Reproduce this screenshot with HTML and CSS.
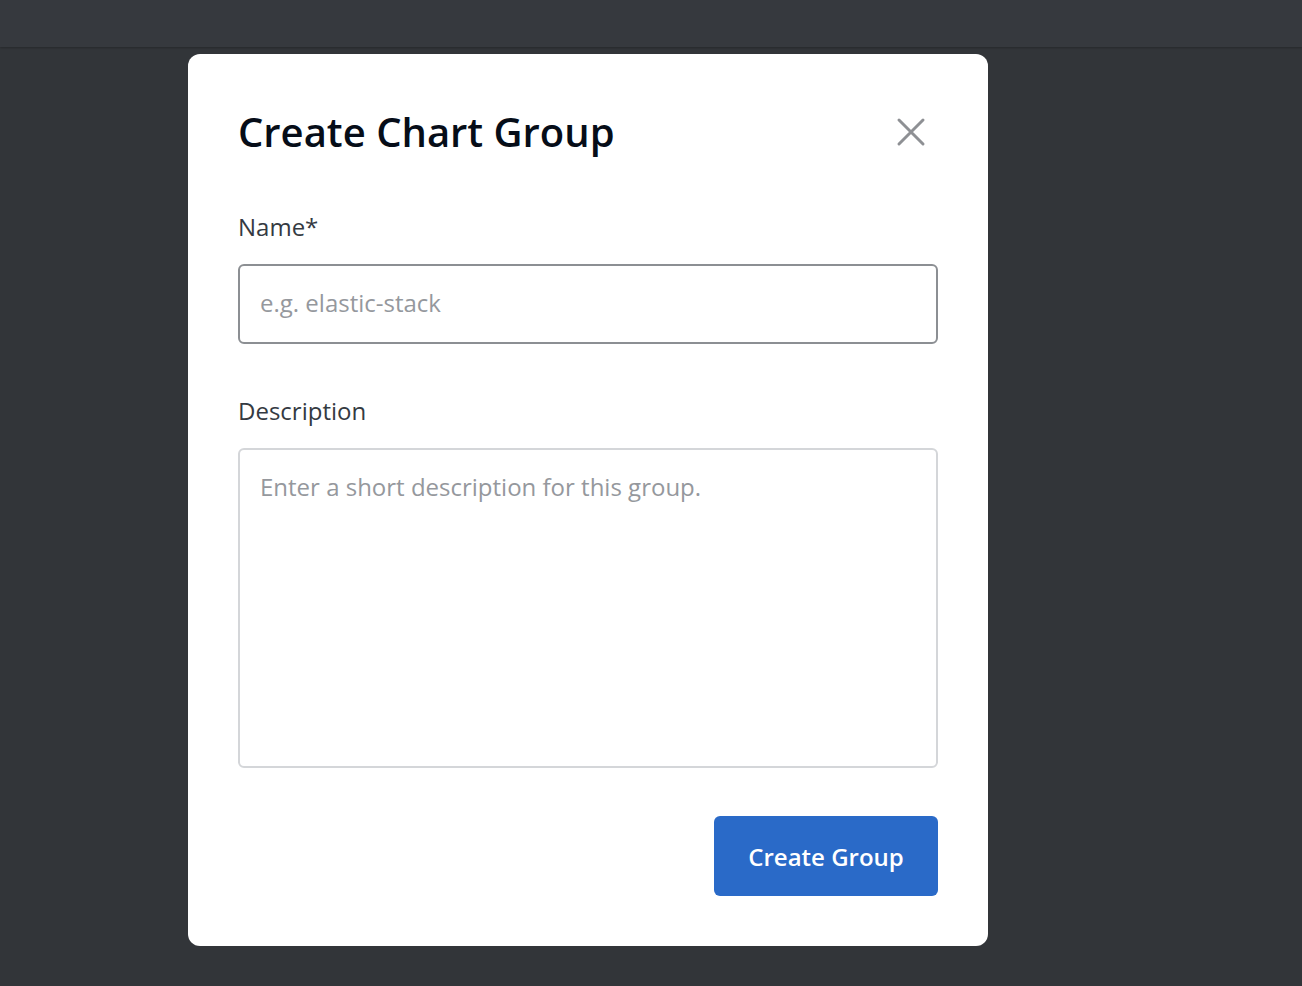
FILE: index.html
```html
<!DOCTYPE html>
<html>
<head>
<meta charset="utf-8">
<link rel="stylesheet" href="styles.css">
</head>
<body>
<div class="topbar"></div>
<div class="modal">
  <div class="modal-header">
    <h1 class="title">Create Chart Group</h1>
    <button class="close" aria-label="Close">
      <svg width="30" height="30" viewBox="0 0 30 30"><path d="M3 3 L27 27 M27 3 L3 27" stroke="#8e9094" stroke-width="3" stroke-linecap="round" fill="none"/></svg>
    </button>
  </div>
  <div class="field">
    <label class="label">Name*</label>
    <input class="input" type="text" placeholder="e.g. elastic-stack">
  </div>
  <div class="field">
    <label class="label">Description</label>
    <textarea class="textarea" placeholder="Enter a short description for this group."></textarea>
  </div>
  <div class="actions">
    <button class="primary">Create Group</button>
  </div>
</div>
</body>
</html>
```
FILE: styles.css
```css
html, body {
  margin: 0;
  padding: 0;
  height: 100%;
}
body {
  background: #323539;
  font-family: "Open Sans", "Noto Sans", sans-serif;
  overflow: hidden;
}
.topbar {
  height: 47px;
  background: #36393e;
  box-shadow: 0 1px 2px rgba(0,0,0,0.25);
}
.modal {
  position: absolute;
  left: 188px;
  top: 54px;
  width: 800px;
  height: 892px;
  box-sizing: border-box;
  padding: 50px;
  background: #fff;
  border-radius: 12px;
  display: flex;
  flex-direction: column;
}
.modal-header {
  display: flex;
  justify-content: space-between;
  align-items: center;
  height: 56px;
  margin-bottom: 51px;
}
.title {
  margin: 0;
  font-size: 40px;
  font-weight: 600;
  color: #060d18;
  line-height: 56px;
}
.close {
  border: none;
  background: none;
  padding: 0;
  margin-right: 12px;
  width: 30px;
  height: 30px;
  display: flex;
}
.field {
  display: flex;
  flex-direction: column;
}
.label {
  font-size: 24px;
  color: #343a42;
  line-height: 32px;
  margin-bottom: 21px;
}
.input {
  height: 80px;
  box-sizing: border-box;
  border: 2px solid #8c8f93;
  border-radius: 6px;
  padding: 0 20px 4px;
  font-family: inherit;
  font-size: 24px;
  color: #343a42;
  outline: none;
  margin-bottom: 51px;
}
.input::placeholder, .textarea::placeholder {
  color: #95989d;
}
.textarea {
  height: 320px;
  box-sizing: border-box;
  border: 2px solid #d4d6d9;
  border-radius: 6px;
  padding: 21px 20px;
  font-family: inherit;
  font-size: 24px;
  line-height: 32px;
  resize: none;
  outline: none;
}
.actions {
  display: flex;
  justify-content: flex-end;
  margin-top: 48px;
}
.primary {
  width: 224px;
  height: 80px;
  border: none;
  border-radius: 6px;
  background: #2a6ac8;
  color: #fff;
  font-family: inherit;
  font-size: 24px;
  font-weight: 600;
}
```
